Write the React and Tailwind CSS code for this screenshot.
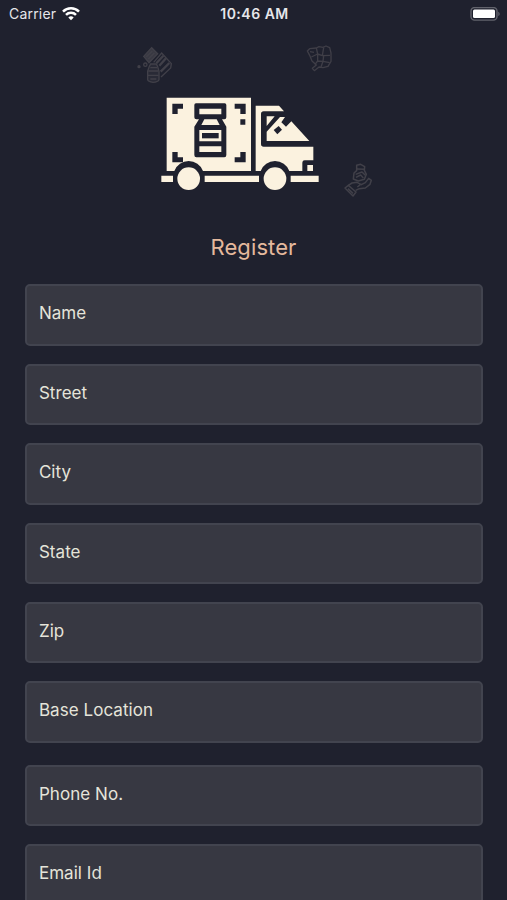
const fields = [
  { label: 'Name' },
  { label: 'Street' },
  { label: 'City' },
  { label: 'State' },
  { label: 'Zip' },
  { label: 'Base Location' },
  { label: 'Phone No.', className: 'mt-[4px]' },
  { label: 'Email Id' },
];

// ─── Status Bar ───────────────────────────────────────────────────────────────
function StatusBar() {
  return (
    <div className="grid h-7 grid-cols-3 items-center pl-[9px] pr-[7px] text-[#e6e6ea]">
      <div className="flex items-center gap-[6px]">
        <span className="text-[14px] leading-none tracking-[0.2px]">Carrier</span>
        <svg className="h-[14px] w-[18px]" viewBox="0 0 18 14" fill="none" stroke="#fff" strokeWidth="2.5">
          <path d="M1 4.6a11.3 11.3 0 0 1 16 0" />
          <path d="M4 7.9a7 7 0 0 1 10 0" />
          <path d="M9 13.2 6.3 10.5a3.8 3.8 0 0 1 5.4 0Z" fill="#fff" stroke="none" />
        </svg>
      </div>
      <span className="text-center text-[14px] leading-none font-semibold tracking-[0.5px]">10:46 AM</span>
      <svg className="h-[14px] w-[30px] justify-self-end" viewBox="0 0 30 14">
        <rect x="1" y="0.5" width="26" height="12.6" rx="3.6" fill="none" stroke="#62636c" strokeWidth="1.4" />
        <rect x="3" y="2.5" width="22" height="8.6" rx="1.5" fill="#fff" />
        <path d="M28.3 4.7v4.4c1.8-.7 1.8-3.7 0-4.4Z" fill="#62636c" />
      </svg>
    </div>
  );
}

// ─── Milk Truck ───────────────────────────────────────────────────────────────
function Truck() {
  return (
    <svg className="h-[115px] w-[180px]" viewBox="0 0 540 345">
      <g fill="#fbf2df">
        <path d="M50 38H303V258H159A46 46 0 0 0 73 258H50Z" />
        <path d="M317 62H387L402 79H341Q333 79 333 87V177Q333 185 341 185H490V226H464Q457 226 457 233V258H418A46 46 0 0 0 332 258H317Z" />
        <path d="M350 94H374L350 123ZM350 140L390 96H405L394 112L408 125L424 109L478 168H350Z" />
        <path d="M472 240H489V258H472Z" />
        <path d="M34 272H69V291H34ZM164 272H327V291H164ZM422 272H506V291H422Z" />
        <circle cx="116" cy="281" r="34" />
        <circle cx="375" cy="281" r="34" />
      </g>
      <g fill="#1f212f">
        {/* cargo corner marks */}
        <path d="M67 56H99V71H83V87H67ZM254 56H287V87H271V71H254ZM271 103H286V119H271ZM67 201H83V217H99V232H67ZM271 201H287V232H254V217H271Z" />
        {/* bottle */}
        <path d="M138 55H224Q229 55 229 60V97Q229 103 223 103H216L229 125V210Q229 217 223 217H139Q133 217 133 210V125L147 103H139Q133 103 133 97V60Q133 55 138 55Z" />
        <path d="M371 135L386 123L396 134L382 148Z" />
      </g>
      <g fill="#fbf2df">
        <path d="M148 71H214V88H148ZM163 103H200L209 120H154ZM148 135H214V169H148ZM148 184H214V201H148Z" />
      </g>
      <path d="M156 144H206V160H156Z" fill="#1f212f" />
    </svg>
  );
}

// ─── Faint Decorations ────────────────────────────────────────────────────────
function BottlesSketch() {
  return (
    <svg className="absolute top-[35px] left-[125px] h-[55px] w-[60px]" viewBox="0 0 180 165" fill="none" stroke="#414049" strokeWidth="4">
      <path d="M56 64 80 38 98 56 72 83Z" fill="#393943" />
      <path d="M64 65 82 48M70 72 88 54" />
      <path d="M86 82 110 54 139 86 137 99 108 126" />
      <path d="M94 85 115 62M103 92 123 70M107 110 133 84" strokeWidth="7" />
      <path d="M73 94 77 87H94L98 95 102 109V134Q99 141 84 142 69 140 68 134V108Z" fill="#292a36" />
      <path d="M70 108H100M69 121H101M76 98H96M76 132H94" />
      <circle cx="61" cy="89" r="5" />
      <circle cx="42" cy="95" r="3" fill="#414049" />
    </svg>
  );
}

function FistSketch() {
  return (
    <svg className="absolute top-[35px] left-[295px] h-[50px] w-[50px]" viewBox="0 0 150 150" fill="none" stroke="#3f3e47" strokeWidth="4" strokeLinejoin="round">
      <path d="M37 48 44 41 64 39 72 35 84 37 93 33 104 38 108 54 108 79 99 94 84 98 72 96 58 107 52 100 64 90 51 78 44 61Z" />
      <path d="M64 39 68 57 82 62 86 38M82 62 105 61M68 57 49 66M68 57 68 78 84 79 86 62M68 78 60 88M84 79 104 83M84 79 78 96M45 50 57 52" />
    </svg>
  );
}

function HandSketch() {
  return (
    <svg className="absolute top-[155px] left-[335px] h-[50px] w-[50px]" viewBox="0 0 150 150" fill="none" stroke="#414049" strokeWidth="4.5" strokeLinejoin="round">
      <path d="M65 31 77 28 89 35 88 46 94 58 88 73 70 78 55 72 57 54 65 47Z" />
      <path d="M66 42 87 43M62 58 81 51 91 61M63 67 77 60 85 69" />
      <path d="M40 91 51 84 66 82 79 89 91 83 101 70 109 76 105 88 91 99 73 101 62 106" />
      <path d="M30 99 40 91 63 111 54 123Z" />
      <path d="M39 101 54 115M76 89 67 96" />
    </svg>
  );
}

// ─── Form Field ───────────────────────────────────────────────────────────────
function Field({ label, className = '' }) {
  return (
    <div className={`h-[61.4px] shrink-0 rounded-[5px] border-2 border-[#42444f] bg-[#373842] px-[11.5px] pt-[15px] ${className}`}>
      <span className="block text-[17px] leading-6 tracking-[0.05px] text-[#e5e4da]">{label}</span>
    </div>
  );
}

// ─── Main Component ───────────────────────────────────────────────────────────
export default function App() {
  return (
    <main className="h-[900px] w-[507px] overflow-hidden bg-[#1f212e] font-['Inter',sans-serif]">
      <header className="relative h-[284.4px]">
        <StatusBar />
        <div className="flex justify-center pt-[57px] pr-[27px]">
          <Truck />
        </div>
        <BottlesSketch />
        <FistSketch />
        <HandSketch />
        <h1 className="mt-[31px] text-center text-[22px] leading-8 tracking-[0.1px] text-[#e5b99d]">Register</h1>
      </header>
      <form className="flex flex-col gap-[18px] pr-[24.5px] pl-[25.4px]">
        {fields.map((field) => (
          <Field key={field.label} {...field} />
        ))}
      </form>
    </main>
  );
}
